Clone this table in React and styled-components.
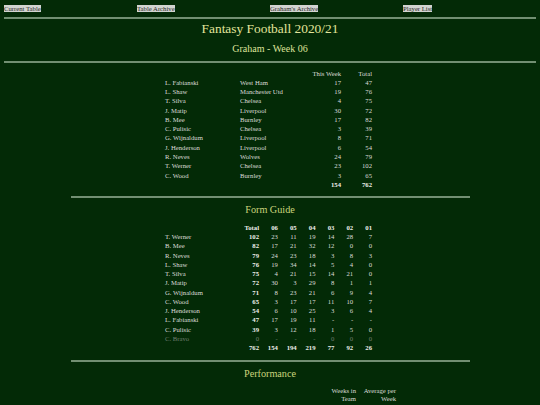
import React from "react";
import styled, { createGlobalStyle } from "styled-components";

const Global = createGlobalStyle`
  html, body { margin: 0; padding: 0; background: #032a06; }
  body { font-family: "Liberation Serif", "Times New Roman", serif; color: #dcdcd8; }
`;

const Page = styled.div`
  padding: 4px 4px 0;
  background: #032a06;
  min-height: 405px;
  box-sizing: border-box;
`;

const Nav = styled.nav`
  display: grid;
  grid-template-columns: repeat(4, 1fr);
  height: 8px;
  font-size: 6.7px;
  line-height: 8px;
`;

const NavLink = styled.a`
  justify-self: start;
  background: #d2d4d0;
  color: #2a2a2a;
  text-decoration: none;
  padding: 0;
  line-height: 7px;
  margin-top: 1px;
`;

const Rule = styled.div`
  height: 2px;
  background: #728f72;
  width: ${(p) => p.$width || "100%"};
  margin: ${(p) => p.$mt}px auto 0;
`;

const Title = styled.h1`
  margin: 2px 0 0;
  font-weight: normal;
  text-align: center;
  font-size: 13.4px;
  line-height: 16px;
  color: #e2e59c;
`;

const Subtitle = styled.h2`
  margin: 6px 0 0;
  font-weight: normal;
  text-align: center;
  font-size: 10px;
  line-height: 12px;
  color: #dfe39a;
`;

const Section = styled.h3`
  margin: 6px 0 0;
  font-weight: normal;
  text-align: center;
  font-size: 10.2px;
  line-height: 12px;
  color: #ccd57c;
`;

const Table = styled.table`
  border-collapse: collapse;
  table-layout: fixed;
  margin: ${(p) => p.$mt}px auto 0;
  width: ${(p) => p.$w}px;
  font-size: 6.7px;
  position: relative;
  left: ${(p) => p.$shift || 0}px;
`;

const Cell = styled.td`
  padding: 0;
  height: 9.28px;
  line-height: 9.28px;
  white-space: nowrap;
  text-align: ${(p) => (p.$num ? "right" : "left")};
  font-weight: ${(p) => (p.$bold ? "bold" : "normal")};
  color: ${(p) => (p.$dim ? "#6f7d6f" : p.$bold ? "#f0f0ec" : "#dcdcd8")};
  vertical-align: middle;
`;

const HeadCell = styled.th`
  padding: 0;
  height: 9.28px;
  line-height: ${(p) => (p.$wrap ? "7.4px" : "9.28px")};
  text-align: right;
  font-weight: ${(p) => (p.$bold ? "bold" : "normal")};
  color: ${(p) => (p.$bold ? "#f0f0ec" : "#dcdcd8")};
  white-space: ${(p) => (p.$wrap ? "normal" : "nowrap")};
  vertical-align: top;
`;

const team = [
  ["L. Fabianski", "West Ham", 17, 47],
  ["L. Shaw", "Manchester Utd", 19, 76],
  ["T. Silva", "Chelsea", 4, 75],
  ["J. Matip", "Liverpool", 30, 72],
  ["B. Mee", "Burnley", 17, 82],
  ["C. Pulisic", "Chelsea", 3, 39],
  ["G. Wijnaldum", "Liverpool", 8, 71],
  ["J. Henderson", "Liverpool", 6, 54],
  ["R. Neves", "Wolves", 24, 79],
  ["T. Werner", "Chelsea", 23, 102],
  ["C. Wood", "Burnley", 3, 65],
];

const form = [
  ["T. Werner", 102, 23, 11, 19, 14, 28, 7],
  ["B. Mee", 82, 17, 21, 32, 12, 0, 0],
  ["R. Neves", 79, 24, 23, 18, 3, 8, 3],
  ["L. Shaw", 76, 19, 34, 14, 5, 4, 0],
  ["T. Silva", 75, 4, 21, 15, 14, 21, 0],
  ["J. Matip", 72, 30, 3, 29, 8, 1, 1],
  ["G. Wijnaldum", 71, 8, 23, 21, 6, 9, 4],
  ["C. Wood", 65, 3, 17, 17, 11, 10, 7],
  ["J. Henderson", 54, 6, 10, 25, 3, 6, 4],
  ["L. Fabianski", 47, 17, 19, 11, "-", "-", "-"],
  ["C. Pulisic", 39, 3, 12, 18, 1, 5, 0],
];

const weeks = ["06", "05", "04", "03", "02", "01"];

export default function App() {
  return (
    <Page>
      <Global />
      <Nav>
        <NavLink href="#">Current Table</NavLink>
        <NavLink href="#">Table Archive</NavLink>
        <NavLink href="#">Graham's Archive</NavLink>
        <NavLink href="#">Player List</NavLink>
      </Nav>
      <Rule $mt={4.5} />
      <Title>Fantasy Football 2020/21</Title>
      <Subtitle>Graham - Week 06</Subtitle>
      <Rule $mt={6.5} />

      <Table $mt={5.5} $w={207} $shift={-1.5}>
        <colgroup>
          <col style={{ width: 75 }} />
          <col style={{ width: 55 }} />
          <col style={{ width: 46 }} />
          <col style={{ width: 31 }} />
        </colgroup>
        <thead>
          <tr>
            <HeadCell />
            <HeadCell />
            <HeadCell>This Week</HeadCell>
            <HeadCell>Total</HeadCell>
          </tr>
        </thead>
        <tbody>
          {team.map((r) => (
            <tr key={r[0]}>
              <Cell>{r[0]}</Cell>
              <Cell>{r[1]}</Cell>
              <Cell $num>{r[2]}</Cell>
              <Cell $num>{r[3]}</Cell>
            </tr>
          ))}
          <tr>
            <Cell />
            <Cell />
            <Cell $num $bold>154</Cell>
            <Cell $num $bold>762</Cell>
          </tr>
        </tbody>
      </Table>

      <Rule $mt={7} $width="75%" />
      <Section>Form Guide</Section>

      <Table $mt={6.5} $w={207} $shift={-1.5}>
        <colgroup>
          <col style={{ width: 75 }} />
          <col style={{ width: 19 }} />
          {weeks.map((w) => (
            <col key={w} style={{ width: 18.83 }} />
          ))}
        </colgroup>
        <thead>
          <tr>
            <HeadCell />
            <HeadCell $bold>Total</HeadCell>
            {weeks.map((w) => (
              <HeadCell key={w} $bold>{w}</HeadCell>
            ))}
          </tr>
        </thead>
        <tbody>
          {form.map((r) => (
            <tr key={r[0]}>
              <Cell>{r[0]}</Cell>
              <Cell $num $bold>{r[1]}</Cell>
              {r.slice(2).map((v, i) => (
                <Cell $num key={i}>{v}</Cell>
              ))}
            </tr>
          ))}
          <tr>
            <Cell $dim>C. Bravo</Cell>
            {[0, "-", "-", "-", 0, 0, 0].map((v, i) => (
              <Cell $num $dim key={i}>{v}</Cell>
            ))}
          </tr>
          <tr>
            <Cell />
            {[762, 154, 194, 219, 77, 92, 26].map((v, i) => (
              <Cell $num $bold key={i}>{v}</Cell>
            ))}
          </tr>
        </tbody>
      </Table>

      <Rule $mt={7} $width="75%" />
      <Section>Performance</Section>

      <Table $mt={7.5} $w={252}>
        <colgroup>
          <col style={{ width: 80 }} />
          <col style={{ width: 96 }} />
          <col style={{ width: 36 }} />
          <col style={{ width: 40 }} />
        </colgroup>
        <thead>
          <tr>
            <HeadCell $wrap />
            <HeadCell $wrap />
            <HeadCell $wrap>Weeks in Team</HeadCell>
            <HeadCell $wrap>Average per Week</HeadCell>
          </tr>
        </thead>
      </Table>
    </Page>
  );
}
